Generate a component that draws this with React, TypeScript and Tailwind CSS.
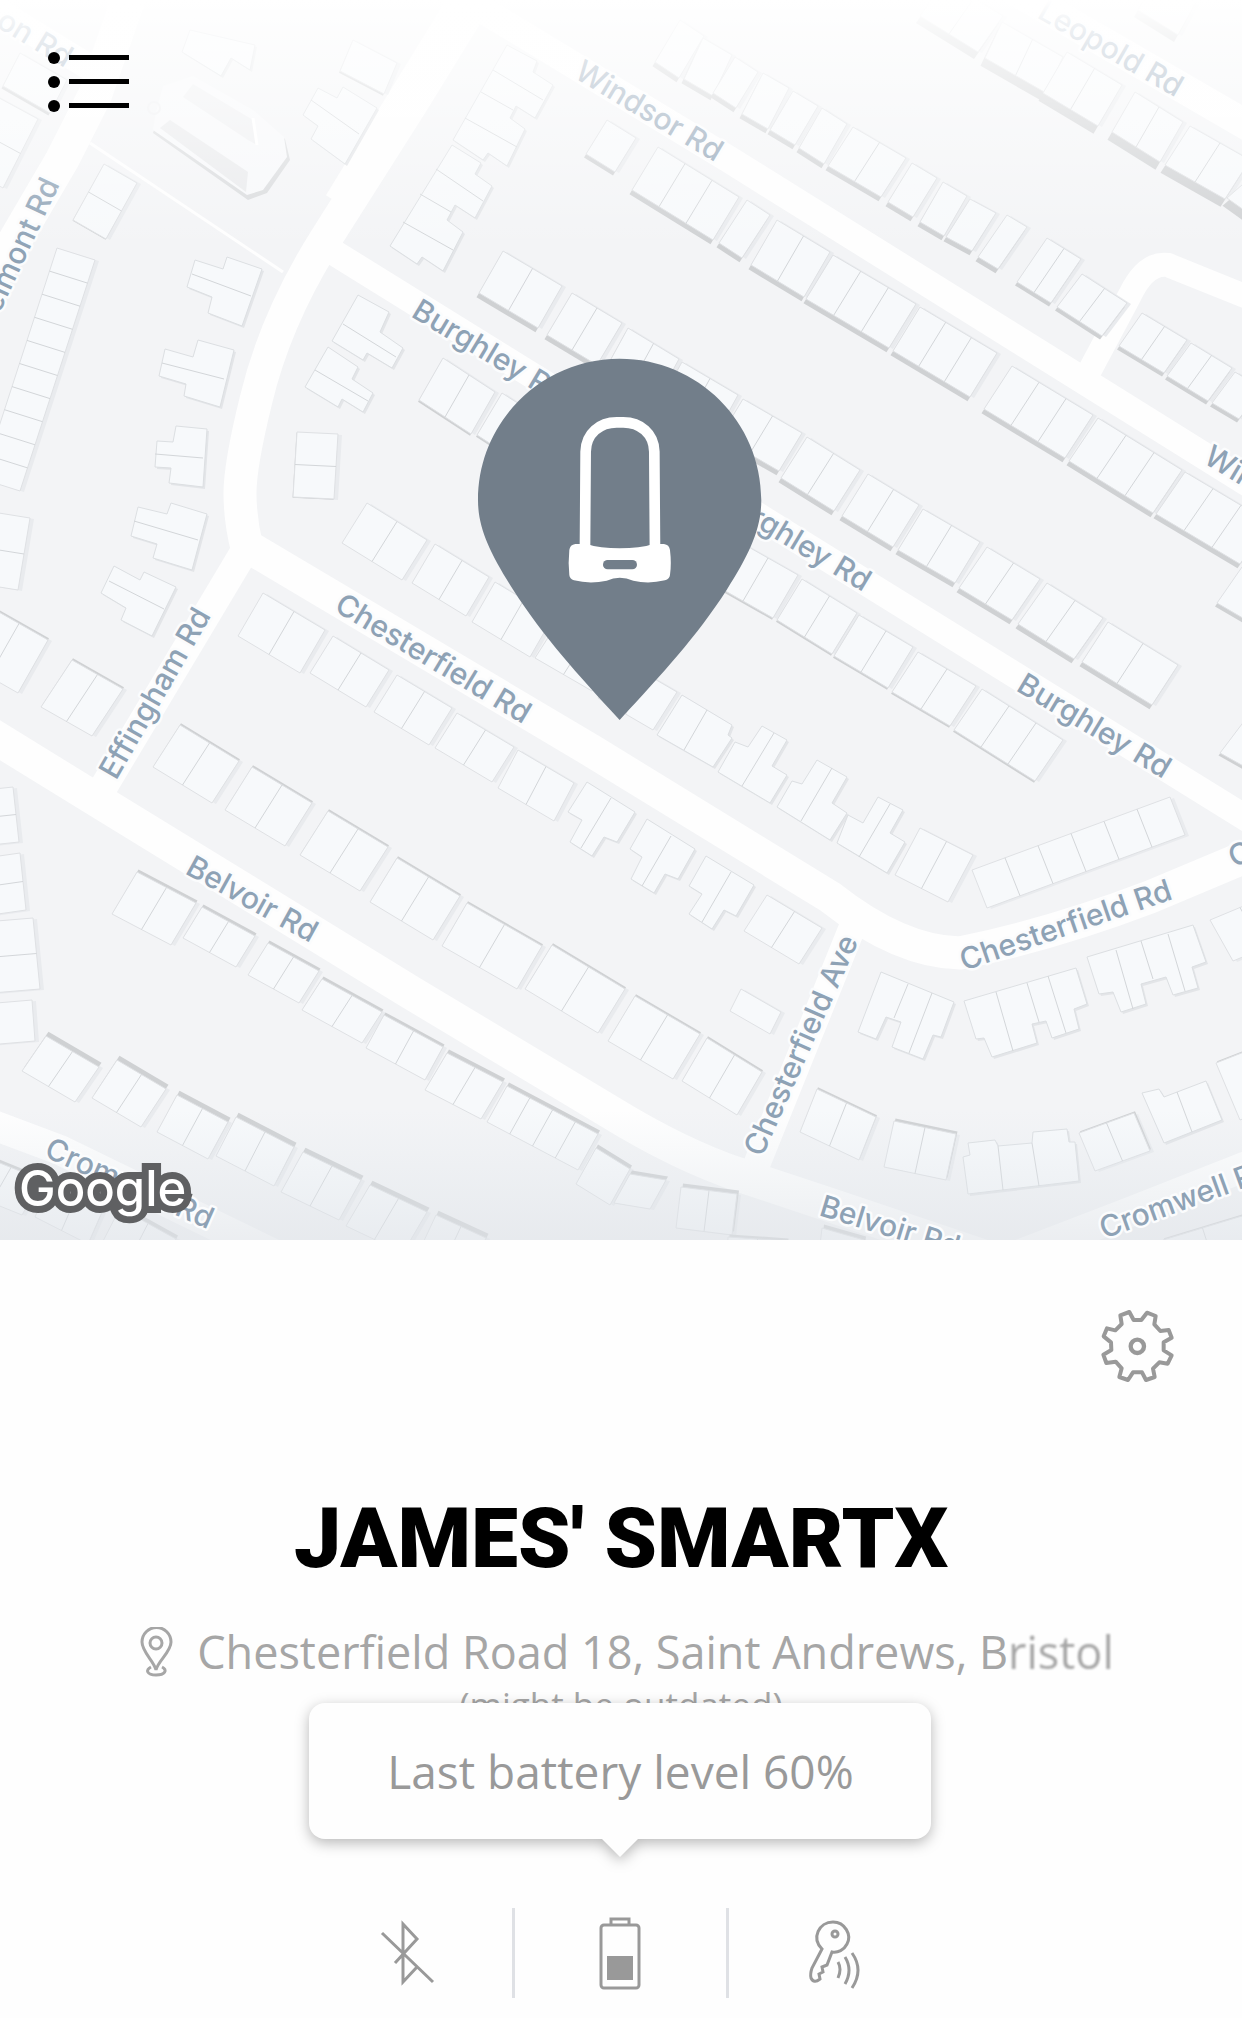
import type { ReactNode } from "react";

// Terraced houses: corner, corner at the end of the row, corner across the row,
// number of units and depth of the shaded wall (negative = wall on the far side)
type Terrace = [number, number, number, number, number, number, number, number];

const terraces: Terrace[] = [
  // Belmont Rd
  [20, 53, 67, 80, 3, 86, 1, 3],
  [38, 119, 3, 188, -10, 93, 2, 0],
  [104, 164, 73, 220, 137, 183, 2, 1],
  [95, 260, 20, 491, 57, 248, 10, 0],
  [353, 40, 397, 63, 340, 71, 1, 2],
  // Leopold Rd
  [945, -20, 1003, 16, 920, 16, 2, 8],
  [1002, 22, 1063, 57, 985, 58, 2, 9],
  [1067, 52, 1122, 85, 1043, 93, 2, 9],
  [1135, 92, 1183, 122, 1112, 132, 2, 9],
  [1190, 126, 1250, 160, 1165, 165, 2, 9],
  [1265, 165, 1300, 190, 1227, 198, 1, 9],
  [1160, -30, 1200, -5, 1138, 10, 1, 8],
  // Windsor Rd, north side
  [680, 20, 704, 36, 655, 62, 1, 5],
  [703, 38, 732, 55, 684, 79, 1, 5],
  [735, 57, 758, 72, 713, 93, 1, 5],
  [763, 73, 789, 88, 742, 114, 1, 5],
  [793, 91, 818, 106, 770, 130, 1, 5],
  [822, 108, 847, 124, 799, 148, 1, 5],
  [853, 127, 906, 158, 828, 166, 2, 5],
  [912, 163, 937, 178, 888, 202, 1, 5],
  [943, 182, 967, 196, 920, 222, 1, 5],
  [970, 199, 996, 213, 946, 237, 1, 5],
  [1007, 215, 1027, 227, 978, 257, 1, 5],
  [1047, 238, 1081, 259, 1017, 282, 2, 4],
  [1082, 274, 1127, 303, 1057, 307, 2, 4],
  [1142, 313, 1187, 340, 1119, 346, 2, 4],
  [1191, 343, 1232, 368, 1167, 376, 2, 4],
  [1235, 372, 1262, 388, 1212, 403, 1, 4],
  // Windsor Rd, south side
  [607, 120, 636, 138, 586, 154, 1, 4],
  [658, 147, 739, 197, 632, 190, 3, 5],
  [747, 200, 770, 215, 719, 243, 1, 5],
  [777, 220, 830, 252, 751, 265, 2, 5],
  [833, 255, 916, 304, 806, 299, 3, 5],
  [920, 307, 997, 353, 893, 351, 3, 5],
  [1012, 366, 1093, 415, 984, 409, 3, 5],
  [1098, 418, 1182, 470, 1069, 461, 3, 5],
  [1185, 472, 1269, 522, 1156, 514, 3, 5],
  [1242, 567, 1290, 595, 1217, 603, 1, 4],
  [1245, 720, 1290, 745, 1220, 753, 1, 3],
  // Burghley Rd, north side
  [503, 251, 562, 286, 479, 293, 2, 5],
  [572, 293, 622, 323, 547, 335, 2, 5],
  [628, 328, 679, 359, 605, 370, 2, 5],
  [682, 362, 738, 395, 660, 402, 2, 5],
  [743, 399, 802, 433, 720, 437, 2, 5],
  [807, 437, 860, 470, 781, 478, 2, 5],
  [868, 474, 919, 505, 842, 516, 2, 5],
  [923, 509, 980, 542, 898, 550, 2, 5],
  [987, 547, 1040, 579, 959, 588, 2, 5],
  [1047, 583, 1103, 618, 1018, 624, 2, 5],
  [1108, 622, 1178, 665, 1082, 662, 2, 5],
  // Burghley Rd, south side
  [443, 358, 495, 392, 419, 400, 2, 2],
  [502, 393, 550, 424, 477, 435, 2, 2],
  [738, 541, 798, 575, 713, 584, 2, 2],
  [802, 579, 857, 613, 777, 620, 2, 2],
  [859, 615, 913, 647, 834, 656, 2, 2],
  [918, 652, 976, 686, 892, 692, 2, 2],
  [982, 689, 1063, 740, 954, 730, 3, 2],
  // Chesterfield Rd, north side
  [297, 432, 293, 497, 338, 434, 2, 1],
  [367, 503, 427, 540, 342, 543, 2, 0],
  [435, 544, 489, 577, 412, 583, 2, 0],
  [495, 582, 553, 617, 472, 622, 2, 0],
  [558, 622, 615, 655, 535, 658, 2, 0],
  [622, 660, 677, 692, 598, 698, 2, 0],
  [920, 828, 973, 855, 895, 875, 2, 0],
  [972, 870, 1170, 797, 987, 908, 6, 0],
  // Chesterfield Rd, south side
  [263, 593, 325, 630, 238, 636, 2, 0],
  [333, 636, 389, 670, 310, 673, 2, 0],
  [397, 675, 452, 708, 374, 712, 2, 0],
  [457, 713, 514, 747, 435, 748, 2, 0],
  [518, 750, 574, 783, 498, 788, 2, 0],
  [767, 895, 822, 928, 744, 931, 2, 0],
  [741, 989, 781, 1012, 730, 1011, 1, 0],
  [1210, 920, 1270, 895, 1233, 961, 2, 0],
  // Effingham Rd
  [30, 518, 18, 590, -20, 510, 2, 0],
  [-10, 607, 48, 640, -40, 660, 2, -2],
  [72, 660, 123, 689, 41, 707, 2, -2],
  // Belvoir Rd, north side
  [180, 725, 239, 761, 153, 767, 2, -2],
  [252, 767, 312, 803, 225, 810, 2, -2],
  [328, 811, 388, 847, 300, 855, 2, -2],
  [397, 858, 460, 896, 370, 902, 2, -2],
  [467, 903, 542, 946, 442, 946, 2, -2],
  [552, 945, 625, 989, 525, 989, 2, -2],
  [635, 996, 700, 1034, 608, 1041, 2, -2],
  [707, 1038, 762, 1072, 682, 1081, 2, -2],
  // Belvoir Rd, south side
  [137, 872, 196, 903, 112, 914, 2, -3],
  [202, 907, 255, 936, 183, 938, 2, -3],
  [268, 943, 319, 971, 248, 975, 2, -3],
  [322, 979, 382, 1012, 302, 1010, 2, -3],
  [384, 1015, 443, 1047, 366, 1048, 2, -3],
  [447, 1053, 503, 1082, 425, 1090, 2, -4],
  [507, 1086, 598, 1134, 487, 1122, 4, -4],
  [596, 1148, 630, 1169, 576, 1184, 1, -4],
  [630, 1174, 666, 1180, 614, 1203, 1, -4],
  [681, 1187, 737, 1194, 676, 1228, 2, -4],
  [728, 1237, 787, 1241, 727, 1260, 2, -3],
  [817, 1089, 876, 1117, 800, 1132, 2, -2],
  [894, 1121, 956, 1134, 884, 1167, 2, -3],
  [1079, 1133, 1134, 1113, 1095, 1171, 2, -2],
  [1216, 1063, 1262, 1045, 1240, 1120, 1, -2],
  [1163, 1240, 1242, 1216, 1170, 1262, 2, -2],
  [822, 1228, 864, 1240, 818, 1262, 1, -4],
  // Cromwell Rd
  [46, 1036, 99, 1067, 22, 1071, 2, -5],
  [117, 1060, 166, 1089, 92, 1098, 2, -5],
  [177, 1095, 228, 1122, 157, 1132, 2, -5],
  [236, 1117, 294, 1147, 216, 1156, 2, -5],
  [303, 1152, 361, 1180, 281, 1192, 2, -5],
  [370, 1185, 427, 1212, 346, 1226, 2, -5],
  [436, 1215, 486, 1238, 422, 1245, 2, -5],
  [-20, 1155, 42, 1180, -40, 1190, 2, -3],
  [52, 1178, 105, 1205, 35, 1217, 2, -4],
  [120, 1208, 176, 1239, 100, 1247, 2, -4],
  [13, 787, 19, 842, -15, 790, 2, 0],
  [20, 853, 26, 910, -15, 858, 2, 0],
  [33, 918, 40, 989, -15, 922, 2, 0],
  [32, 1000, 35, 1041, -15, 1004, 1, 0],
];

// Houses with a less regular outline, and the walls between their units
const houses = [
  { outline: "190,30 255,45 250,70 231,58 221,76 182,52", walls: "" },
  { outline: "195,260 223,269 227,257 262,269 242,326 208,313 212,297 187,287", walls: "M192 274L251 296" },
  { outline: "165,349 193,357 198,340 234,350 220,407 184,396 186,384 159,376", walls: "M162 363L224 379" },
  { outline: "318,88 337,98 343,87 377,108 345,164 311,139 318,126 303,115", walls: "M311 100L359 134" },
  { outline: "358,295 389,312 380,332 403,348 392,368 367,353 363,360 332,341", walls: "M343 324L396 357" },
  { outline: "328,347 358,367 352,379 373,393 363,412 342,399 338,407 305,387", walls: "M315 370L368 401" },
  {
    outline: "507,45 537,61 533,72 553,85 535,118 516,106 510,118 525,129 507,166 488,153 483,160 453,140",
    walls: "M493 70L543 100M481 92L513 110M465 118L517 147",
  },
  {
    outline: "452,145 481,163 475,174 492,186 475,218 455,205 447,220 463,232 443,271 422,257 417,264 390,246",
    walls: "M436 169L483 201M420 194L451 212M403 222L453 250",
  },
  { outline: "682,695 732,725 728,735 732,738 713,767 657,735", walls: "M707 710L684 750" },
  { outline: "735,742 748,747 762,726 787,740 772,766 787,775 770,803 718,772", walls: "M774 733L742 786" },
  { outline: "792,781 802,784 817,760 847,777 832,803 847,813 830,840 777,807", walls: "M832 768L801 821" },
  { outline: "848,815 863,823 878,797 903,810 890,833 905,842 887,873 837,843", walls: "M890 804L859 857" },
  { outline: "587,782 635,812 617,842 604,837 592,856 570,842 582,820 568,812", walls: "M611 798L581 848" },
  { outline: "647,819 695,849 678,879 665,874 654,893 631,879 642,857 630,849", walls: "M671 836L642 886" },
  { outline: "706,856 754,885 736,916 724,910 712,929 689,914 702,894 689,886", walls: "M731 872L702 922" },
  { outline: "176,426 207,429 203,487 169,483 171,468 155,467 157,441 173,442", walls: "M155 454L203 458" },
  { outline: "138,507 167,514 171,503 207,514 192,570 153,558 157,544 131,536", walls: "M134 521L198 540" },
  { outline: "114,566 140,580 144,572 176,587 152,636 121,620 126,608 101,593", walls: "M109 581L164 609" },
  {
    outline: "881,972 954,1002 941,1037 933,1035 923,1059 892,1047 901,1022 886,1017 876,1039 858,1032",
    walls: "M908 984L894 1018M932 993L909 1053",
  },
  {
    outline:
      "964,1001 1076,968 1087,1004 1074,1009 1079,1029 1052,1038 1046,1021 1032,1024 1037,1043 992,1057 984,1038 976,1039",
    walls: "M996 992L1013 1051M1027 983L1039 1022M1048 976L1066 1033",
  },
  {
    outline:
      "1087,957 1193,925 1206,962 1192,967 1198,988 1173,995 1166,977 1141,984 1146,1004 1121,1012 1113,992 1099,994",
    walls: "M1116 950L1133 1009M1141 941L1153 979M1168 934L1185 991",
  },
  {
    outline:
      "968,1143 995,1140 998,1146 1032,1143 1033,1132 1067,1129 1069,1142 1075,1142 1079,1181 968,1194 963,1157 970,1155",
    walls: "M998 1146L1003 1190M1032 1143L1039 1186",
  },
  { outline: "1142,1093 1159,1089 1164,1097 1206,1081 1222,1120 1164,1143", walls: "M1177 1092L1192 1132" },
];

const roads = [
  { d: "M135 -20L95 95L62 160L-20 300", width: 34 },
  { d: "M-20 0L110 80", width: 26 },
  { d: "M500 -40L415 98L325 240Q275 320 256 400Q240 465 240 493Q240 520 247 548", width: 33 },
  { d: "M490 -40L405 98L340 204", width: 33 },
  { d: "M325 247L873 587L1262 828", width: 26 },
  { d: "M242 543L592 751L830 897Q900 952 960 953Q1050 935 1150 897L1262 850", width: 33 },
  { d: "M244 552L97 798", width: 28 },
  { d: "M-20 728L97 800L410 992L610 1112Q680 1155 740 1175L830 1205L1000 1262", width: 34 },
  { d: "M856 918L752 1176", width: 27 },
  { d: "M-20 1120L60 1150L290 1262", width: 30 },
  { d: "M1000 1262L1130 1212L1262 1160", width: 30 },
  { d: "M440 -16L730 160L1262 492", width: 27 },
  { d: "M1090 370L1130 295Q1146 262 1168 265L1262 303", width: 24 },
  { d: "M1000 -18L1262 134", width: 30 },
  { d: "M90 143L283 272", width: 3 },
];

const labels = [
  { name: "Windsor Rd", x: 573, y: 77, angle: 31 },
  { name: "Leopold Rd", x: 1036, y: 17, angle: 30 },
  { name: "Burghley Rd", x: 410, y: 316, angle: 31 },
  { name: "Burghley Rd", x: 715, y: 503, angle: 31 },
  { name: "Burghley Rd", x: 1015, y: 690, angle: 31 },
  { name: "Windsor Rd", x: 1202, y: 462, angle: 31 },
  { name: "Chesterfield Rd", x: 333, y: 610, angle: 31 },
  { name: "Chesterfield Rd", x: 964, y: 971, angle: -19 },
  { name: "Chesterfield Rd", x: 1234, y: 868, angle: -24 },
  { name: "Chesterfield Ave", x: 762, y: 1158, angle: -66 },
  { name: "Effingham Rd", x: 116, y: 781, angle: -60 },
  { name: "Belvoir Rd", x: 184, y: 873, angle: 29 },
  { name: "Belvoir Rd", x: 818, y: 1215, angle: 17 },
  { name: "Cromwell Rd", x: 43, y: 1156, angle: 24 },
  { name: "Cromwell Rd", x: 1104, y: 1239, angle: -20 },
];

function TerraceBlock({ terrace }: { terrace: Terrace }) {
  const [x0, y0, x1, y1, x3, y3, units, wall] = terrace;
  const points = `${x0},${y0} ${x1},${y1} ${x1 + x3 - x0},${y1 + y3 - y0} ${x3},${y3}`;

  let walls = "";
  for (let i = 1; i < units; i++) {
    const dx = ((x1 - x0) * i) / units;
    const dy = ((y1 - y0) * i) / units;
    walls += `M${x0 + dx} ${y0 + dy}L${x3 + dx} ${y3 + dy}`;
  }

  return (
    <g>
      <polygon points={points} transform="translate(4 1)" fill="#e9ebee" />
      {wall !== 0 && (
        <polygon
          points={points}
          transform={`translate(${-wall * 0.5} ${wall * 0.87})`}
          fill="#cfd1d3"
        />
      )}
      <polygon points={points} fill="#f7f9fb" stroke="#dfe1e4" />
      <path d={walls} stroke="#d3d6d9" />
    </g>
  );
}

function Pin() {
  return (
    <g transform="translate(410 340) scale(0.3333)">
      <path
        d="M629 1140C500 1000 400 890 310 750C240 640 204 565 204 480C204 245 395 56 629 56C863 56 1054 245 1054 480C1054 565 1020 640 950 750C860 890 758 1000 629 1140Z"
        fill="#727e8a"
      />
      <path
        d="M525 625L527 335C528 280 570 247 620 247H640C690 247 732 280 733 335L735 625"
        fill="none"
        stroke="#fff"
        strokeWidth="32"
      />
      <path
        d="M496 612H530Q570 625 629 625Q690 625 730 612H762Q778 614 780 630Q785 670 780 705Q779 717 765 721Q715 733 670 722Q629 704 590 722Q540 733 492 721Q479 717 478 705Q474 670 478 630Q480 614 496 612Z"
        fill="#fff"
      />
      <rect x="579" y="660" width="102" height="28" rx="14" fill="#727e8a" />
    </g>
  );
}

function StreetMap() {
  return (
    <svg
      viewBox="0 0 1242 1240"
      className="block h-auto w-full"
      role="img"
      aria-label="Map around Chesterfield Road"
    >
      <defs>
        <linearGradient id="fadeTop" x1="0" y1="0" x2="0" y2="1">
          <stop offset="0" stopColor="#fff" />
          <stop offset="0.15" stopColor="#fff" stopOpacity="0.8" />
          <stop offset="1" stopColor="#fff" stopOpacity="0" />
        </linearGradient>
        <linearGradient id="fadeBottom" x1="0" y1="0" x2="0" y2="1">
          <stop offset="0" stopColor="#dfe6ec" stopOpacity="0" />
          <stop offset="1" stopColor="#dfe3e8" stopOpacity="0.6" />
        </linearGradient>
      </defs>

      <rect width="1242" height="1240" fill="#f3f4f6" />
      {roads.map((road) => (
        <path
          key={road.d}
          d={road.d}
          fill="none"
          stroke="#fefefe"
          strokeWidth={road.width}
          strokeLinejoin="round"
        />
      ))}

      {terraces.map((terrace) => (
        <TerraceBlock key={terrace.join()} terrace={terrace} />
      ))}
      {houses.map((house) => (
        <g key={house.outline}>
          <polygon points={house.outline} transform="translate(2 2)" fill="#e3e5e8" />
          <polygon points={house.outline} fill="#f7f9fb" stroke="#dcdfe2" />
          <path d={house.walls} stroke="#d3d6d9" />
        </g>
      ))}

      {/* church */}
      <path d="M153 133L158 118L163 88L193 79L253 113L285 139L290 160L267 193L248 200Z" fill="#d9dbdd" />
      <path d="M153 130L156 112L163 86L193 76L253 110L284 137L287 157L263 190L247 195Z" fill="#f7f8fa" />
      <path d="M160 128L170 120L248 172L246 192Z" fill="#e9eaec" />
      <path d="M183 97L193 84L253 120L257 145L248 140Z" fill="#eeeff1" />
      <path d="M253 118L257 145" fill="none" stroke="#fff" strokeWidth="3" />
      <circle cx="154" cy="108" r="6" fill="none" stroke="#eeeff1" strokeWidth="2" />

      <rect y="1110" width="1242" height="130" fill="url(#fadeBottom)" />

      <g
        fill="#8ea2b5"
        stroke="#fbfcfd"
        strokeWidth="5"
        strokeLinejoin="round"
        className="font-['Inter',sans-serif] text-[30px] font-medium [paint-order:stroke]"
      >
        {labels.map((label) => (
          <text
            key={`${label.name}-${label.x}`}
            transform={`translate(${label.x} ${label.y}) rotate(${label.angle})`}
          >
            {label.name}
          </text>
        ))}
        <text textAnchor="end" transform="translate(60 184) rotate(-65)">
          Belmont Rd
        </text>
        <text textAnchor="end" transform="translate(65 68) rotate(31)">
          on Rd
        </text>
      </g>

      <rect width="1242" height="250" fill="url(#fadeTop)" />

      <text
        x="19"
        y="1206"
        fill="#fff"
        stroke="#5f6062"
        strokeWidth="14"
        className="font-['Inter',sans-serif] text-[49px] font-medium [paint-order:stroke]"
      >
        Google
      </text>

      <Pin />
    </svg>
  );
}

function MenuIcon() {
  return (
    <svg width="82" height="60" viewBox="0 0 82 60" aria-hidden="true">
      {[6, 30, 54].map((y) => (
        <g key={y}>
          <circle cx="6" cy={y} r="6" />
          <rect x="21" y={y - 3} width="60" height="5" />
        </g>
      ))}
    </svg>
  );
}

function GearIcon() {
  return (
    <svg
      width="80"
      height="80"
      viewBox="110 80 240 240"
      fill="none"
      stroke="#999"
      strokeWidth="12"
      strokeLinejoin="round"
      aria-hidden="true"
    >
      <path d="M180 105L207 95L220 119H243L260 97L286 107L282 132L300 152L325 149L334 172L310 186V210L334 225L322 250L297 246L278 265L283 290L257 299L245 276H218L203 299L177 290L184 264L166 244L138 248L129 223L153 209L152 186L130 168L140 144L165 150L184 131Z" />
      <circle cx="231" cy="198" r="20" strokeWidth="13" />
    </svg>
  );
}

function LocationIcon() {
  return (
    <svg
      width="33"
      height="50"
      viewBox="0 0 33 50"
      fill="none"
      stroke="#a6a6a6"
      strokeWidth="3"
      className="shrink-0"
      aria-hidden="true"
    >
      <path d="M16 43C14 34 2 25 2 15a14 14 0 0 1 29 0C31 25 18 34 16 43Z" />
      <circle cx="16" cy="16" r="6" />
      <path d="M11 40C5 43 7 48 16 48S28 43 22 40" />
    </svg>
  );
}

function BluetoothOffIcon() {
  return (
    <svg width="56" height="72" viewBox="0 0 56 72" fill="none" stroke="#999" strokeWidth="3" aria-hidden="true">
      <path d="M3 16L54 65M16 46L38 22L24 7V65L38 50" />
    </svg>
  );
}

function BatteryIcon() {
  return (
    <svg width="42" height="74" viewBox="0 0 42 74" fill="none" stroke="#999" strokeWidth="3" aria-hidden="true">
      <path d="M12 9V3H30V9" />
      <rect x="2" y="9" width="38" height="63" rx="3" />
      <rect x="8" y="40" width="26" height="24" fill="#999" stroke="none" />
    </svg>
  );
}

function KeyIcon() {
  return (
    <svg width="56" height="72" viewBox="0 0 56 72" fill="none" stroke="#999" strokeWidth="3" aria-hidden="true">
      <path d="M15 32C4 21 12 5 26 5C38 5 45 18 40 27C37 33 31 36 25 35L20 48L15 50L16 55L12 57L13 62Q7 67 4 61Q3 57 5 51Z" />
      <circle cx="28" cy="17" r="3" />
      <path d="M31 45Q35 52 31 61M38 40Q46 53 38 67M45 36Q57 53 45 71" />
    </svg>
  );
}

function StatusButton({ label, children }: { label: string; children: ReactNode }) {
  return (
    <button aria-label={label} className="flex h-full w-full items-center justify-center">
      {children}
    </button>
  );
}

export default function App() {
  return (
    <main className="bg-[#fefefe] font-['Open_Sans',sans-serif] text-[#a6a6a6]">
      <section className="relative">
        <StreetMap />
        <button aria-label="Menu" className="absolute top-[52px] left-12">
          <MenuIcon />
        </button>
      </section>

      <section className="flex flex-col items-center pb-5">
        <div className="flex w-full justify-end pt-[67px] pr-[65px]">
          <button aria-label="Settings">
            <GearIcon />
          </button>
        </div>

        <h1 className="mt-28 font-['Roboto',sans-serif] text-[84px] leading-20 font-black text-black">
          JAMES' SMARTX
        </h1>

        <div className="mt-12 flex items-center gap-6 pl-3 text-[45px] leading-[50px]">
          <LocationIcon />
          <p className="whitespace-nowrap">
            Chesterfield Road 18, Saint Andrews, B
            <span className="blur-[1px]">ristol</span>
          </p>
        </div>
        <p className="mt-2 text-[35px] leading-10">(might be outdated)</p>

        <ul className="mt-[183px] grid h-[90px] w-[642px] max-w-full grid-cols-3 divide-x-3 divide-[#dfe1e5] pl-0.5">
          <li>
            <StatusButton label="Bluetooth off">
              <BluetoothOffIcon />
            </StatusButton>
          </li>
          <li className="relative">
            <StatusButton label="Battery">
              <BatteryIcon />
            </StatusButton>
            <div
              role="tooltip"
              className="absolute bottom-full left-1/2 mb-[69px] w-[622px] -translate-x-1/2 rounded-2xl bg-[#fefefe] text-center text-[46px] leading-[136px] text-[#999] drop-shadow-[0_4px_7px_rgba(0,0,0,0.28)]"
            >
              Last battery level 60%
              <span className="absolute top-full left-1/2 -translate-x-1/2 border-x-[18px] border-t-[18px] border-x-transparent border-t-[#fefefe]" />
            </div>
          </li>
          <li>
            <StatusButton label="Digital key">
              <KeyIcon />
            </StatusButton>
          </li>
        </ul>
      </section>
    </main>
  );
}
